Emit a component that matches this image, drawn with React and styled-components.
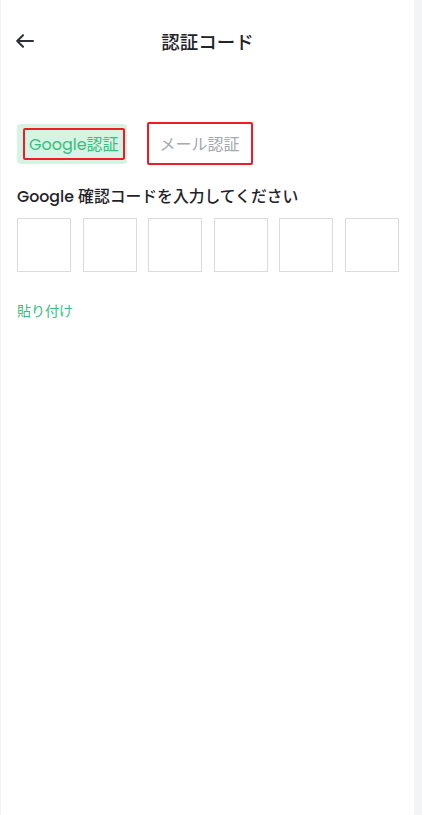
import React from "react"
import styled, { createGlobalStyle } from "styled-components"

const GlobalStyle = createGlobalStyle`
  html, body {
    margin: 0;
    padding: 0;
    background: #f3f4f6;
  }
  body {
    font-family: Poppins, "Noto Sans", "Noto Sans CJK JP", sans-serif;
  }
  * { box-sizing: border-box; }
`

const Page = styled.div`
  width: 413px;
  min-height: 815px;
  margin-left: 1px;
  background: #fff;
`

const Header = styled.header`
  height: 82px;
  display: flex;
  align-items: center;
  padding: 0 15px;
`

const BackButton = styled.button`
  border: 0;
  background: none;
  padding: 0;
  width: 18px;
  height: 18px;
  display: flex;
  align-items: center;
  justify-content: center;
  color: #2a2f3a;
  cursor: pointer;
`

const Title = styled.h1`
  flex: 1;
  margin: 0 18px 0 0;
  text-align: center;
  font-size: 18.5px;
  font-weight: 500;
  color: #222428;
  font-family: "Noto Sans CJK JP", sans-serif;
`

const Tabs = styled.div`
  display: flex;
  align-items: center;
  gap: 20px;
  padding: 40px 16px 0;
`

const Tab = styled.button`
  border: 0;
  padding: ${p => (p.$active ? "4px 2px 4px 6px" : "0")};
  border-radius: 4px;
  background: ${p => (p.$active ? "#d6f4e4" : "transparent")};
  cursor: pointer;
  font-family: inherit;
`

const Marker = styled.span`
  display: flex;
  align-items: center;
  justify-content: center;
  height: ${p => (p.$active ? "32px" : "43px")};
  padding: ${p => (p.$active ? "0 4px" : "0 11px")};
  border: 2px solid #ee1c24;
  border-radius: 2px;
  font-size: 16px;
  color: ${p => (p.$active ? "#36be7e" : "#a4a7ae")};
  font-family: Poppins, "Noto Sans", "Noto Sans CJK JP", sans-serif;
`

const Label = styled.p`
  margin: 20px 16px 0;
  font-size: 15.8px;
  font-weight: 500;
  color: #1f2329;
  line-height: 24px;
  font-family: Poppins, "Noto Sans CJK JP", sans-serif;
`

const CodeRow = styled.div`
  display: flex;
  justify-content: space-between;
  padding: 0 15px 0 16px;
  margin-top: 9px;
`

const CodeBox = styled.input`
  width: 54px;
  height: 54px;
  border: 1px solid #d8dce1;
  border-radius: 0;
  text-align: center;
  font-size: 22px;
  outline: none;
`

const Paste = styled.button`
  margin: 28px 0 0 16px;
  padding: 0;
  border: 0;
  background: none;
  font-size: 14px;
  color: #36be7e;
  cursor: pointer;
  font-family: "Noto Sans CJK JP", sans-serif;
`

export default function App() {
  return (
    <>
      <GlobalStyle />
      <Page>
        <Header>
          <BackButton aria-label="back">
            <svg width="18" height="14" viewBox="0 0 18 14" fill="none" stroke="currentColor" strokeWidth="2" strokeLinecap="round" strokeLinejoin="round">
              <path d="M17 7H1.5M7 1.2L1.2 7L7 12.8" />
            </svg>
          </BackButton>
          <Title>認証コード</Title>
        </Header>
        <Tabs>
          <Tab $active>
            <Marker $active>Google認証</Marker>
          </Tab>
          <Tab>
            <Marker>メール認証</Marker>
          </Tab>
        </Tabs>
        <Label>Google 確認コードを入力してください</Label>
        <CodeRow>
          {[0, 1, 2, 3, 4, 5].map(i => (
            <CodeBox key={i} maxLength={1} />
          ))}
        </CodeRow>
        <Paste>貼り付け</Paste>
      </Page>
    </>
  )
}
